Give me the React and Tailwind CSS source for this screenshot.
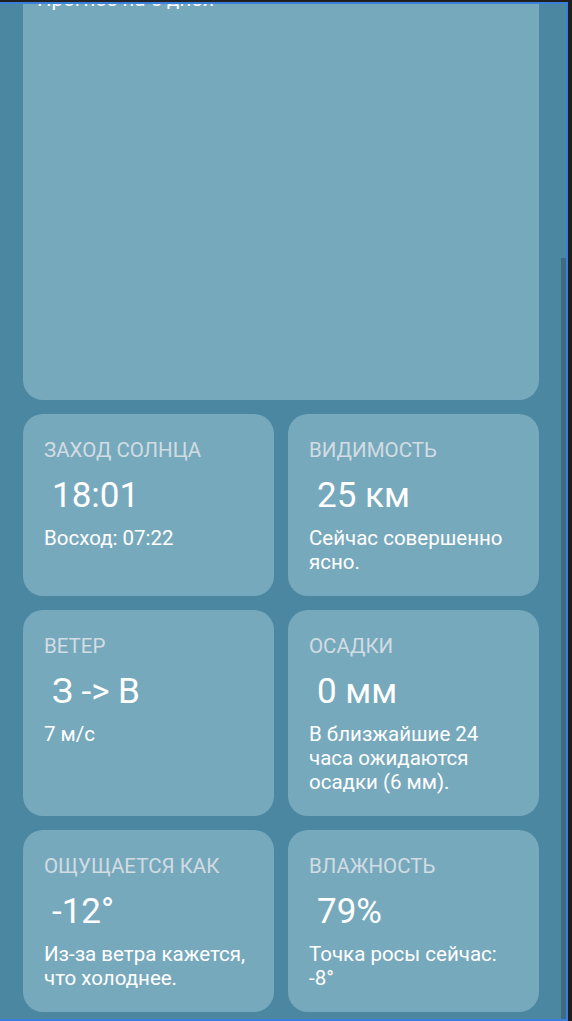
import React from "react";

const cards = [
  { title: "ЗАХОД СОЛНЦА", value: "18:01", note: "Восход: 07:22" },
  { title: "ВИДИМОСТЬ", value: "25 км", note: "Сейчас совершенно ясно." },
  { title: "ВЕТЕР", value: "З -> В", note: "7 м/с" },
  {
    title: "ОСАДКИ",
    value: "0 мм",
    note: "В близжайшие 24 часа ожидаются осадки (6 мм).",
  },
  {
    title: "ОЩУЩАЕТСЯ КАК",
    value: "-12°",
    note: "Из-за ветра кажется, что холоднее.",
  },
  { title: "ВЛАЖНОСТЬ", value: "79%", note: "Точка росы сейчас: -8°" },
];

const InfoCard = ({ title, value, note }) => {
  return (
    <div className="flex flex-col rounded-[20px] bg-[#77a9bd] px-[21px] pt-[24px] pb-[22px]">
      {/* Title */}
      <div className="text-[20.5px] leading-[24px] text-[#d2dce3]">{title}</div>
      {/* Big value */}
      <div className="mt-[13px] ml-[8px] text-[35px] leading-[42px] text-white">
        {value}
      </div>
      {/* Description */}
      <div className="mt-[9px] text-[20.5px] leading-[24px] text-white">{note}</div>
    </div>
  );
};

const App = () => {
  return (
    <div
      className="h-[1021px] w-[572px] overflow-hidden bg-[#1f1f1f] pt-[2px] pr-[4px]"
      style={{ fontFamily: "Roboto, 'Noto Sans', sans-serif" }}
    >
      <div className="flex h-[1019px] border-t-2 border-r-2 border-b-2 border-[#3b7fdc]">
        {/* Scroll viewport */}
        <div className="relative h-full flex-1 overflow-hidden bg-[#4b87a1]">
          <div className="-mt-[37px] ml-[23px] flex w-[516px] flex-col gap-[14px]">
            {/* 5-day forecast card (scrolled past) */}
            <div className="h-[433px] rounded-[20px] bg-[#77a9bd] pt-[20px] pl-[14px]">
              <div className="text-[20.5px] leading-[24px] text-white">
                Прогноз на 5 дней
              </div>
            </div>

            <div className="grid grid-cols-2 gap-[14px]">
              {cards.map((c) => (
                <InfoCard key={c.title} {...c} />
              ))}
            </div>
          </div>

          {/* Scrollbar thumb */}
          <div className="absolute right-0 top-[254px] bottom-0 w-[5px] bg-[#3e6c80]" />
        </div>
      </div>
    </div>
  );
};

export default App;
